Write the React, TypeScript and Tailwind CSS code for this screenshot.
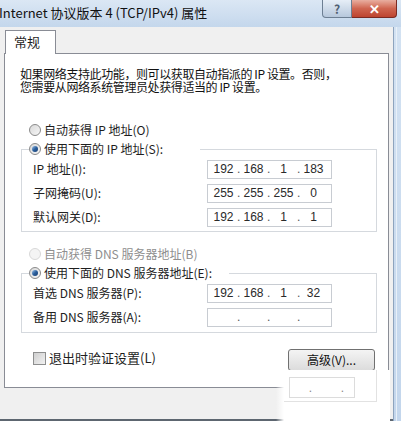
import React from "react";

const cjk = "font-['Noto_Sans_CJK_SC','Noto_Sans',sans-serif]";
const num = "font-['Liberation_Sans','Noto_Sans_CJK_SC',sans-serif]";

const intro =
  "如果网络支持此功能，则可以获取自动指派的 IP 设置。否则，\n您需要从网络系统管理员处获得适当的 IP 设置。";

function Radio({ checked, disabled }: { checked?: boolean; disabled?: boolean }) {
  return (
    <span
      className={
        "flex items-center justify-center w-[12px] h-[12px] rounded-full border shrink-0 " +
        (disabled
          ? "border-[#d8d8d8] bg-[#f4f4f4]"
          : "border-[#8a8a8a] bg-gradient-to-br from-[#d9d9d9] to-[#f6f6f6]")
      }
    >
      {checked && (
        <span className="w-[6px] h-[6px] rounded-full bg-gradient-to-br from-[#9cc3ea] via-[#2b5f9c] to-[#1b3f72]" />
      )}
    </span>
  );
}

function IpBox({ parts }: { parts: string[] }) {
  return (
    <div className={`flex items-center w-[125px] h-[19px] border border-[#c8ccd2] bg-white pl-[2px] text-[12px] text-[#2a2a2a] ${num}`}>
      {parts.map((p, i) => (
        <React.Fragment key={i}>
          {i > 0 && <span className="w-[3px] text-[#555] leading-none">.</span>}
          <span className="w-[27px] text-center leading-none">{p}</span>
        </React.Fragment>
      ))}
    </div>
  );
}

function Row({ label, parts }: { label: string; parts: string[] }) {
  return (
    <div className="flex items-center h-[24px]">
      <span className="w-[174px] text-[#222]">{label}</span>
      <IpBox parts={parts} />
    </div>
  );
}

export default function App() {
  return (
    <div className={`relative w-[401px] h-[421px] overflow-hidden bg-[#c9dbef] text-[12px] text-[#1e1e1e] ${cjk}`}>
      {/* title bar */}
      <div className="flex h-[27px] bg-gradient-to-b from-[#dbe7f4] to-[#c4d7ec]">
        <div className="flex-1 pt-[5px] -ml-[1px] text-[13px] leading-[16px] text-[#111]">
          Internet 协议版本 4 (TCP/IPv4) 属性
        </div>
        <div className="flex items-start mr-[4px]">
          <div className="flex items-center justify-center w-[30px] h-[18px] border border-[#6d7f93] border-t-0 rounded-bl-[4px] bg-gradient-to-b from-[#e6eef7] to-[#b7c8dc] text-[12px] font-bold text-[#4f5f72]">
            ?
          </div>
          <div className="flex items-center justify-center w-[45px] h-[18px] border border-[#7a2a22] border-t-0 border-l-0 rounded-br-[4px] bg-gradient-to-b from-[#e8aea0] via-[#cf6550] to-[#bd4430] text-[13px] font-bold text-white">
            ✕
          </div>
        </div>
      </div>

      {/* body */}
      <div className="flex h-[394px]">
        <div className="flex flex-col w-[393px] bg-[#f0f0f0] pl-[4px] pr-[4px] pt-[3px] border-b-2 border-[#5d6670]">
          {/* tab */}
          <div className="relative z-10 -mb-px ml-[1px] w-[51px] h-[24px] border border-b-0 border-[#898c95] bg-white pl-[8px] pt-[3px] text-[13px] leading-[16px]">
            常规
          </div>
          {/* panel */}
          <div className="h-[335px] border border-[#898c95] bg-white">
            <p className="mt-[13px] pl-[15px] leading-[13px] tracking-[-0.4px] text-[#111] whitespace-pre-line">
              {intro}
            </p>

            {/* IP */}
            <div className="mt-[30px] flex items-center gap-[3px] h-[14px] pl-[24px]">
              <Radio />
              <span>自动获得 IP 地址(O)</span>
            </div>
            <fieldset className="mt-[5px] ml-[16px] w-[356px] border border-[#d5d9de] pl-[7px] pb-[2px]">
              <legend className="w-[171px] h-[14px] flex items-center gap-[3px]">
                <Radio checked />
                <span>使用下面的 IP 地址(S):</span>
              </legend>
              <div className="pl-[4px] mt-[1px]">
                <Row label="IP 地址(I):" parts={["192", "168", "1", "183"]} />
                <Row label="子网掩码(U):" parts={["255", "255", "255", "0"]} />
                <Row label="默认网关(D):" parts={["192", "168", "1", "1"]} />
              </div>
            </fieldset>

            {/* DNS */}
            <div className="mt-[15px] flex items-center gap-[3px] h-[14px] pl-[24px] text-[#8e8e8e]">
              <Radio disabled />
              <span>自动获得 DNS 服务器地址(B)</span>
            </div>
            <fieldset className="mt-[5px] ml-[16px] w-[356px] border border-[#d5d9de] pl-[7px] pb-[3px]">
              <legend className="w-[200px] h-[14px] flex items-center gap-[3px]">
                <Radio checked />
                <span>使用下面的 DNS 服务器地址(E):</span>
              </legend>
              <div className="pl-[4px] mt-[1px]">
                <Row label="首选 DNS 服务器(P):" parts={["192", "168", "1", "32"]} />
                <Row label="备用 DNS 服务器(A):" parts={["", "", "", ""]} />
              </div>
            </fieldset>

            {/* bottom */}
            <div className="flex items-start justify-between mt-[16px] pl-[28px] pr-[13px]">
              <div className="flex items-center gap-[3px] h-[14px] mt-[2px]">
                <span className="w-[13px] h-[13px] border border-[#8e8f8f] bg-gradient-to-br from-[#cfcfcf] to-[#f2f2f2]" />
                <span className="text-[13px]">退出时验证设置(L)</span>
              </div>
              <div className="flex items-center justify-center w-[87px] h-[22px] border border-[#707070] rounded-[3px] bg-gradient-to-b from-[#f4f4f4] to-[#dcdcdc] text-[12px] text-[#111]">
                高级(V)...
              </div>
            </div>
          </div>
        </div>
        {/* right frame */}
        <div className="flex-1 border-l border-[#8ea4be] bg-gradient-to-b from-[#d3e2f2] to-[#c3d6ec]">
          <div className="ml-[2px] h-full border-l border-[#e8f0f8]" />
        </div>
      </div>

      {/* pasted-over fragment */}
      <div className="absolute left-[276px] top-[370px] w-[114px] h-[51px] flex">
        <div className="w-[8px] h-full bg-gradient-to-r from-transparent to-white" />
        <div className="flex-1 bg-white">
          <div className="w-[93px] h-[32px] border-r border-b border-[#e2e2e2] pt-[7px] pl-[5px]">
            <div className={`flex items-center w-[66px] h-[21px] border border-[#dcdcdc] text-[#888] ${num}`}>
              <span className="w-[22px] text-right">.</span>
              <span className="w-[32px] text-right">.</span>
            </div>
          </div>
        </div>
      </div>
    </div>
  );
}
